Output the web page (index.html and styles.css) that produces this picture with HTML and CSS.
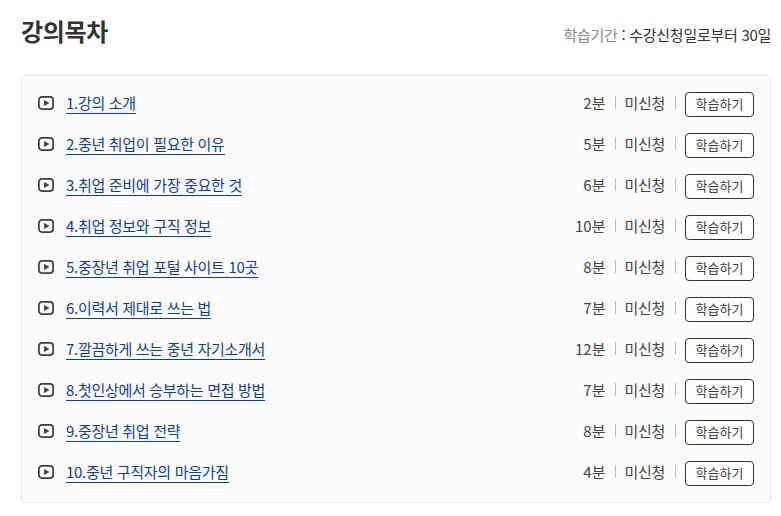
FILE: index.html
```html
<!DOCTYPE html>
<html lang="ko">
<head>
    <meta charset="UTF-8">
    <meta name="viewport" content="width=device-width, initial-scale=1.0">
    <title>강의목차</title>
    <link rel="stylesheet" href="styles.css">
</head>
<body>
    <div class="header">
        <h2 class="title">강의목차</h2>
        <p class="period"><span class="period-label">학습기간</span> : 수강신청일로부터 30일</p>
    </div>
    <svg class="icon-defs" width="0" height="0">
        <symbol id="play" viewBox="0 0 16 14">
            <rect x="0.9" y="0.9" width="14.2" height="12.2" rx="3" fill="none" stroke="#3d3d3d" stroke-width="1.7"/>
            <path d="M6.4 4.4v5.2l4.4-2.6z" fill="#3d3d3d" stroke="#3d3d3d" stroke-width="0.7" stroke-linejoin="round"/>
        </symbol>
    </svg>
    <ul class="lesson-list">
        <li class="lesson">
            <svg class="play-icon"><use href="#play"/></svg>
            <a class="lesson-title" href="#">1.강의 소개</a>
            <span class="lesson-time">2분</span>
            <span class="lesson-state">미신청</span>
            <a class="study-btn" href="#">학습하기</a>
        </li>
        <li class="lesson">
            <svg class="play-icon"><use href="#play"/></svg>
            <a class="lesson-title" href="#">2.중년 취업이 필요한 이유</a>
            <span class="lesson-time">5분</span>
            <span class="lesson-state">미신청</span>
            <a class="study-btn" href="#">학습하기</a>
        </li>
        <li class="lesson">
            <svg class="play-icon"><use href="#play"/></svg>
            <a class="lesson-title" href="#">3.취업 준비에 가장 중요한 것</a>
            <span class="lesson-time">6분</span>
            <span class="lesson-state">미신청</span>
            <a class="study-btn" href="#">학습하기</a>
        </li>
        <li class="lesson">
            <svg class="play-icon"><use href="#play"/></svg>
            <a class="lesson-title" href="#">4.취업 정보와 구직 정보</a>
            <span class="lesson-time">10분</span>
            <span class="lesson-state">미신청</span>
            <a class="study-btn" href="#">학습하기</a>
        </li>
        <li class="lesson">
            <svg class="play-icon"><use href="#play"/></svg>
            <a class="lesson-title" href="#">5.중장년 취업 포털 사이트 10곳</a>
            <span class="lesson-time">8분</span>
            <span class="lesson-state">미신청</span>
            <a class="study-btn" href="#">학습하기</a>
        </li>
        <li class="lesson">
            <svg class="play-icon"><use href="#play"/></svg>
            <a class="lesson-title" href="#">6.이력서 제대로 쓰는 법</a>
            <span class="lesson-time">7분</span>
            <span class="lesson-state">미신청</span>
            <a class="study-btn" href="#">학습하기</a>
        </li>
        <li class="lesson">
            <svg class="play-icon"><use href="#play"/></svg>
            <a class="lesson-title" href="#">7.깔끔하게 쓰는 중년 자기소개서</a>
            <span class="lesson-time">12분</span>
            <span class="lesson-state">미신청</span>
            <a class="study-btn" href="#">학습하기</a>
        </li>
        <li class="lesson">
            <svg class="play-icon"><use href="#play"/></svg>
            <a class="lesson-title" href="#">8.첫인상에서 승부하는 면접 방법</a>
            <span class="lesson-time">7분</span>
            <span class="lesson-state">미신청</span>
            <a class="study-btn" href="#">학습하기</a>
        </li>
        <li class="lesson">
            <svg class="play-icon"><use href="#play"/></svg>
            <a class="lesson-title" href="#">9.중장년 취업 전략</a>
            <span class="lesson-time">8분</span>
            <span class="lesson-state">미신청</span>
            <a class="study-btn" href="#">학습하기</a>
        </li>
        <li class="lesson">
            <svg class="play-icon"><use href="#play"/></svg>
            <a class="lesson-title" href="#">10.중년 구직자의 마음가짐</a>
            <span class="lesson-time">4분</span>
            <span class="lesson-state">미신청</span>
            <a class="study-btn" href="#">학습하기</a>
        </li>
    </ul>
</body>
</html>
```
FILE: styles.css
```css
body {
    margin: 0;
    padding: 0 10px 0 21px;
    font-family: "Noto Sans CJK KR", "Noto Sans", sans-serif;
    font-size: 15px;
    color: #444;
    background-color: #fff;
}
.header {
    display: flex;
    justify-content: space-between;
    align-items: center;
    height: 75px;
    padding-bottom: 14px;
    box-sizing: border-box;
}
.title {
    margin: 0;
    font-size: 24px;
    font-weight: 700;
    letter-spacing: -0.3px;
    color: #333;
}
.period {
    margin: 8px 0 0;
    font-size: 15px;
    letter-spacing: -0.28px;
    color: #333;
}
.period-label {
    color: #888;
}
.icon-defs {
    position: absolute;
}
.lesson-list {
    list-style: none;
    margin: 0;
    padding: 7px 16px 9px;
    border: 1px solid #eaeaea;
    border-radius: 4px;
    background-color: #fcfcfc;
}
.lesson {
    display: flex;
    align-items: center;
    height: 41px;
}
.play-icon {
    width: 16px;
    height: 14px;
    margin: 0 12px 1px 0;
}
.lesson-title {
    margin: 0 auto 2px 0;
    font-size: 15px;
    letter-spacing: -0.3px;
    color: #0a3da8;
    text-decoration: none;
    border-bottom: 1px solid #0a3da8;
    line-height: 21px;
}
.lesson-time,
.lesson-state {
    display: flex;
    align-items: center;
    margin-bottom: 2px;
    font-size: 15px;
}
.lesson-time {
    letter-spacing: 0;
}
.lesson-state {
    letter-spacing: -0.3px;
}
.lesson-time::after,
.lesson-state::after {
    content: "";
    width: 1px;
    height: 13px;
    background-color: #bbb;
}
.lesson-time::after {
    margin: 0 8px 0 10px;
}
.lesson-state::after {
    margin: 0 9px 0 10px;
}
.study-btn {
    width: 69px;
    height: 25px;
    margin-top: 1px;
    box-sizing: border-box;
    border: 1px solid #333;
    border-radius: 4px;
    background-color: #fff;
    text-align: center;
    line-height: 21px;
    font-size: 13px;
    color: #444;
    text-decoration: none;
}
```
